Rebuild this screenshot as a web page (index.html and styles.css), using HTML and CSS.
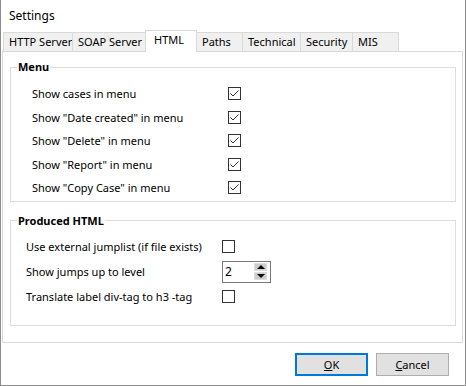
FILE: index.html
```html
<!DOCTYPE html>
<html lang="en">
<head>
    <meta charset="UTF-8">
    <title>Settings</title>
    <link rel="stylesheet" href="styles.css">
</head>
<body>

<div class="dialog">
    <div class="title">Settings</div>

    <div class="tabs">
        <div class="tab tab-http">HTTP Server</div>
        <div class="tab tab-soap">SOAP Server</div>
        <div class="tab tab-html active">HTML</div>
        <div class="tab tab-paths">Paths</div>
        <div class="tab tab-tech">Technical</div>
        <div class="tab tab-sec">Security</div>
        <div class="tab tab-mis">MIS</div>
    </div>

    <div class="panel">
        <fieldset class="group group-menu">
            <legend>Menu</legend>
            <div class="row"><span>Show cases in menu</span><span class="check checked"></span></div>
            <div class="row"><span>Show "Date created" in menu</span><span class="check checked"></span></div>
            <div class="row"><span>Show "Delete" in menu</span><span class="check checked"></span></div>
            <div class="row"><span>Show "Report" in menu</span><span class="check checked"></span></div>
            <div class="row"><span>Show "Copy Case" in menu</span><span class="check checked"></span></div>
        </fieldset>

        <fieldset class="group group-html">
            <legend>Produced HTML</legend>
            <div class="row"><span>Use external jumplist (if file exists)</span><span class="check"></span></div>
            <div class="row row-spin">
                <span>Show jumps up to level</span>
                <div class="spin">
                    <span class="spin-value">2</span>
                    <div class="spin-buttons">
                        <span class="spin-btn up"></span>
                        <span class="spin-btn down"></span>
                    </div>
                </div>
            </div>
            <div class="row"><span>Translate label div-tag to h3 -tag</span><span class="check"></span></div>
        </fieldset>
    </div>

    <div class="buttons">
        <button class="btn btn-default"><u>O</u>K</button>
        <button class="btn"><u>C</u>ancel</button>
    </div>
</div>

</body>
</html>
```

FILE: styles.css
```css
body {
    margin: 0;
    padding: 0;
    background-color: #fff;
    font-family: 'Segoe UI', 'Noto Sans', sans-serif;
    font-size: 11px;
    color: #000;
}

.dialog {
    box-sizing: border-box;
    width: 466px;
    height: 386px;
    border: 1px solid #8c8c8c;
    border-top: none;
    background-color: #fff;
}

.title {
    height: 32px;
    line-height: 32px;
    padding-left: 8px;
    font-size: 12px;
}

.tabs {
    display: flex;
    align-items: flex-end;
    height: 19px;
    margin-left: 2px;
    white-space: nowrap;
}

.tab {
    box-sizing: border-box;
    height: 19px;
    line-height: 17px;
    padding-left: 5px;
    border: 1px solid #d9d9d9;
    border-bottom: none;
    background-color: #f0f0f0;
    margin-right: -1px;
}

.tab-http { width: 70px; }
.tab-soap { width: 74px; }
.tab-paths { width: 47px; }
.tab-tech { width: 59px; }
.tab-sec { width: 53px; }
.tab-mis { width: 47px; }

.tab.active {
    position: relative;
    z-index: 1;
    width: 52px;
    height: 22px;
    line-height: 18px;
    padding-left: 8px;
    margin-bottom: -1px;
    background-color: #fff;
}

.panel {
    box-sizing: border-box;
    height: 292px;
    margin: 0 2px 0 1px;
    border: 1px solid #d9d9d9;
    padding: 7px 6px 0 7px;
}

.group {
    margin: 0;
    border: 1px solid #dcdcdc;
    min-width: 0;
}

.group legend {
    font-weight: bold;
    padding: 0 1px;
    line-height: 16px;
}

.group-menu {
    padding: 7px 0 1px 21px;
}

.group-menu legend {
    margin-left: -15px;
}

.group-html {
    margin-top: 11px;
    padding: 6px 0 16px 15px;
}

.group-html legend {
    margin-left: -9px;
}

.row {
    display: grid;
    grid-template-columns: 196px auto;
    align-items: center;
    height: 23.5px;
}

.group-html .row {
    height: 24px;
}

.group-html .row-spin {
    height: 26px;
}

.check {
    box-sizing: border-box;
    width: 13px;
    height: 13px;
    border: 1px solid #333;
    background-color: #fff;
}

.check.checked {
    background-image: url("data:image/svg+xml;utf8,<svg xmlns='http://www.w3.org/2000/svg' width='11' height='11'><polyline points='1.5,5.5 4,8 9.5,2.5' fill='none' stroke='%23333' stroke-width='1'/></svg>");
    background-repeat: no-repeat;
}

.spin {
    box-sizing: border-box;
    display: flex;
    align-items: center;
    width: 49px;
    height: 22px;
    border: 1px solid #7a7a7a;
    padding-left: 2px;
    font-size: 12px;
}

.spin-value {
    flex: 1;
}

.spin-buttons {
    display: flex;
    flex-direction: column;
    gap: 1px;
    margin-right: 3px;
}

.spin-btn {
    box-sizing: border-box;
    width: 13px;
    height: 8px;
    background-color: #cdcdcd;
    border: 1px solid #e0e0e0;
    position: relative;
}

.spin-btn::after {
    content: '';
    position: absolute;
    left: 2px;
    width: 0;
    height: 0;
    border-left: 4px solid transparent;
    border-right: 4px solid transparent;
}

.spin-btn.up::after {
    top: 1px;
    border-bottom: 4px solid #000;
}

.spin-btn.down::after {
    top: 1px;
    border-top: 4px solid #000;
}

.buttons {
    display: flex;
    justify-content: flex-end;
    gap: 8px;
    margin-top: 10px;
    padding-right: 16px;
}

.btn {
    box-sizing: border-box;
    width: 73px;
    height: 23px;
    font-family: inherit;
    font-size: 11px;
    color: #000;
    background-color: #e1e1e1;
    border: 1px solid #adadad;
    padding: 0;
}

.btn-default {
    border: 2px solid #0078d7;
}
```
